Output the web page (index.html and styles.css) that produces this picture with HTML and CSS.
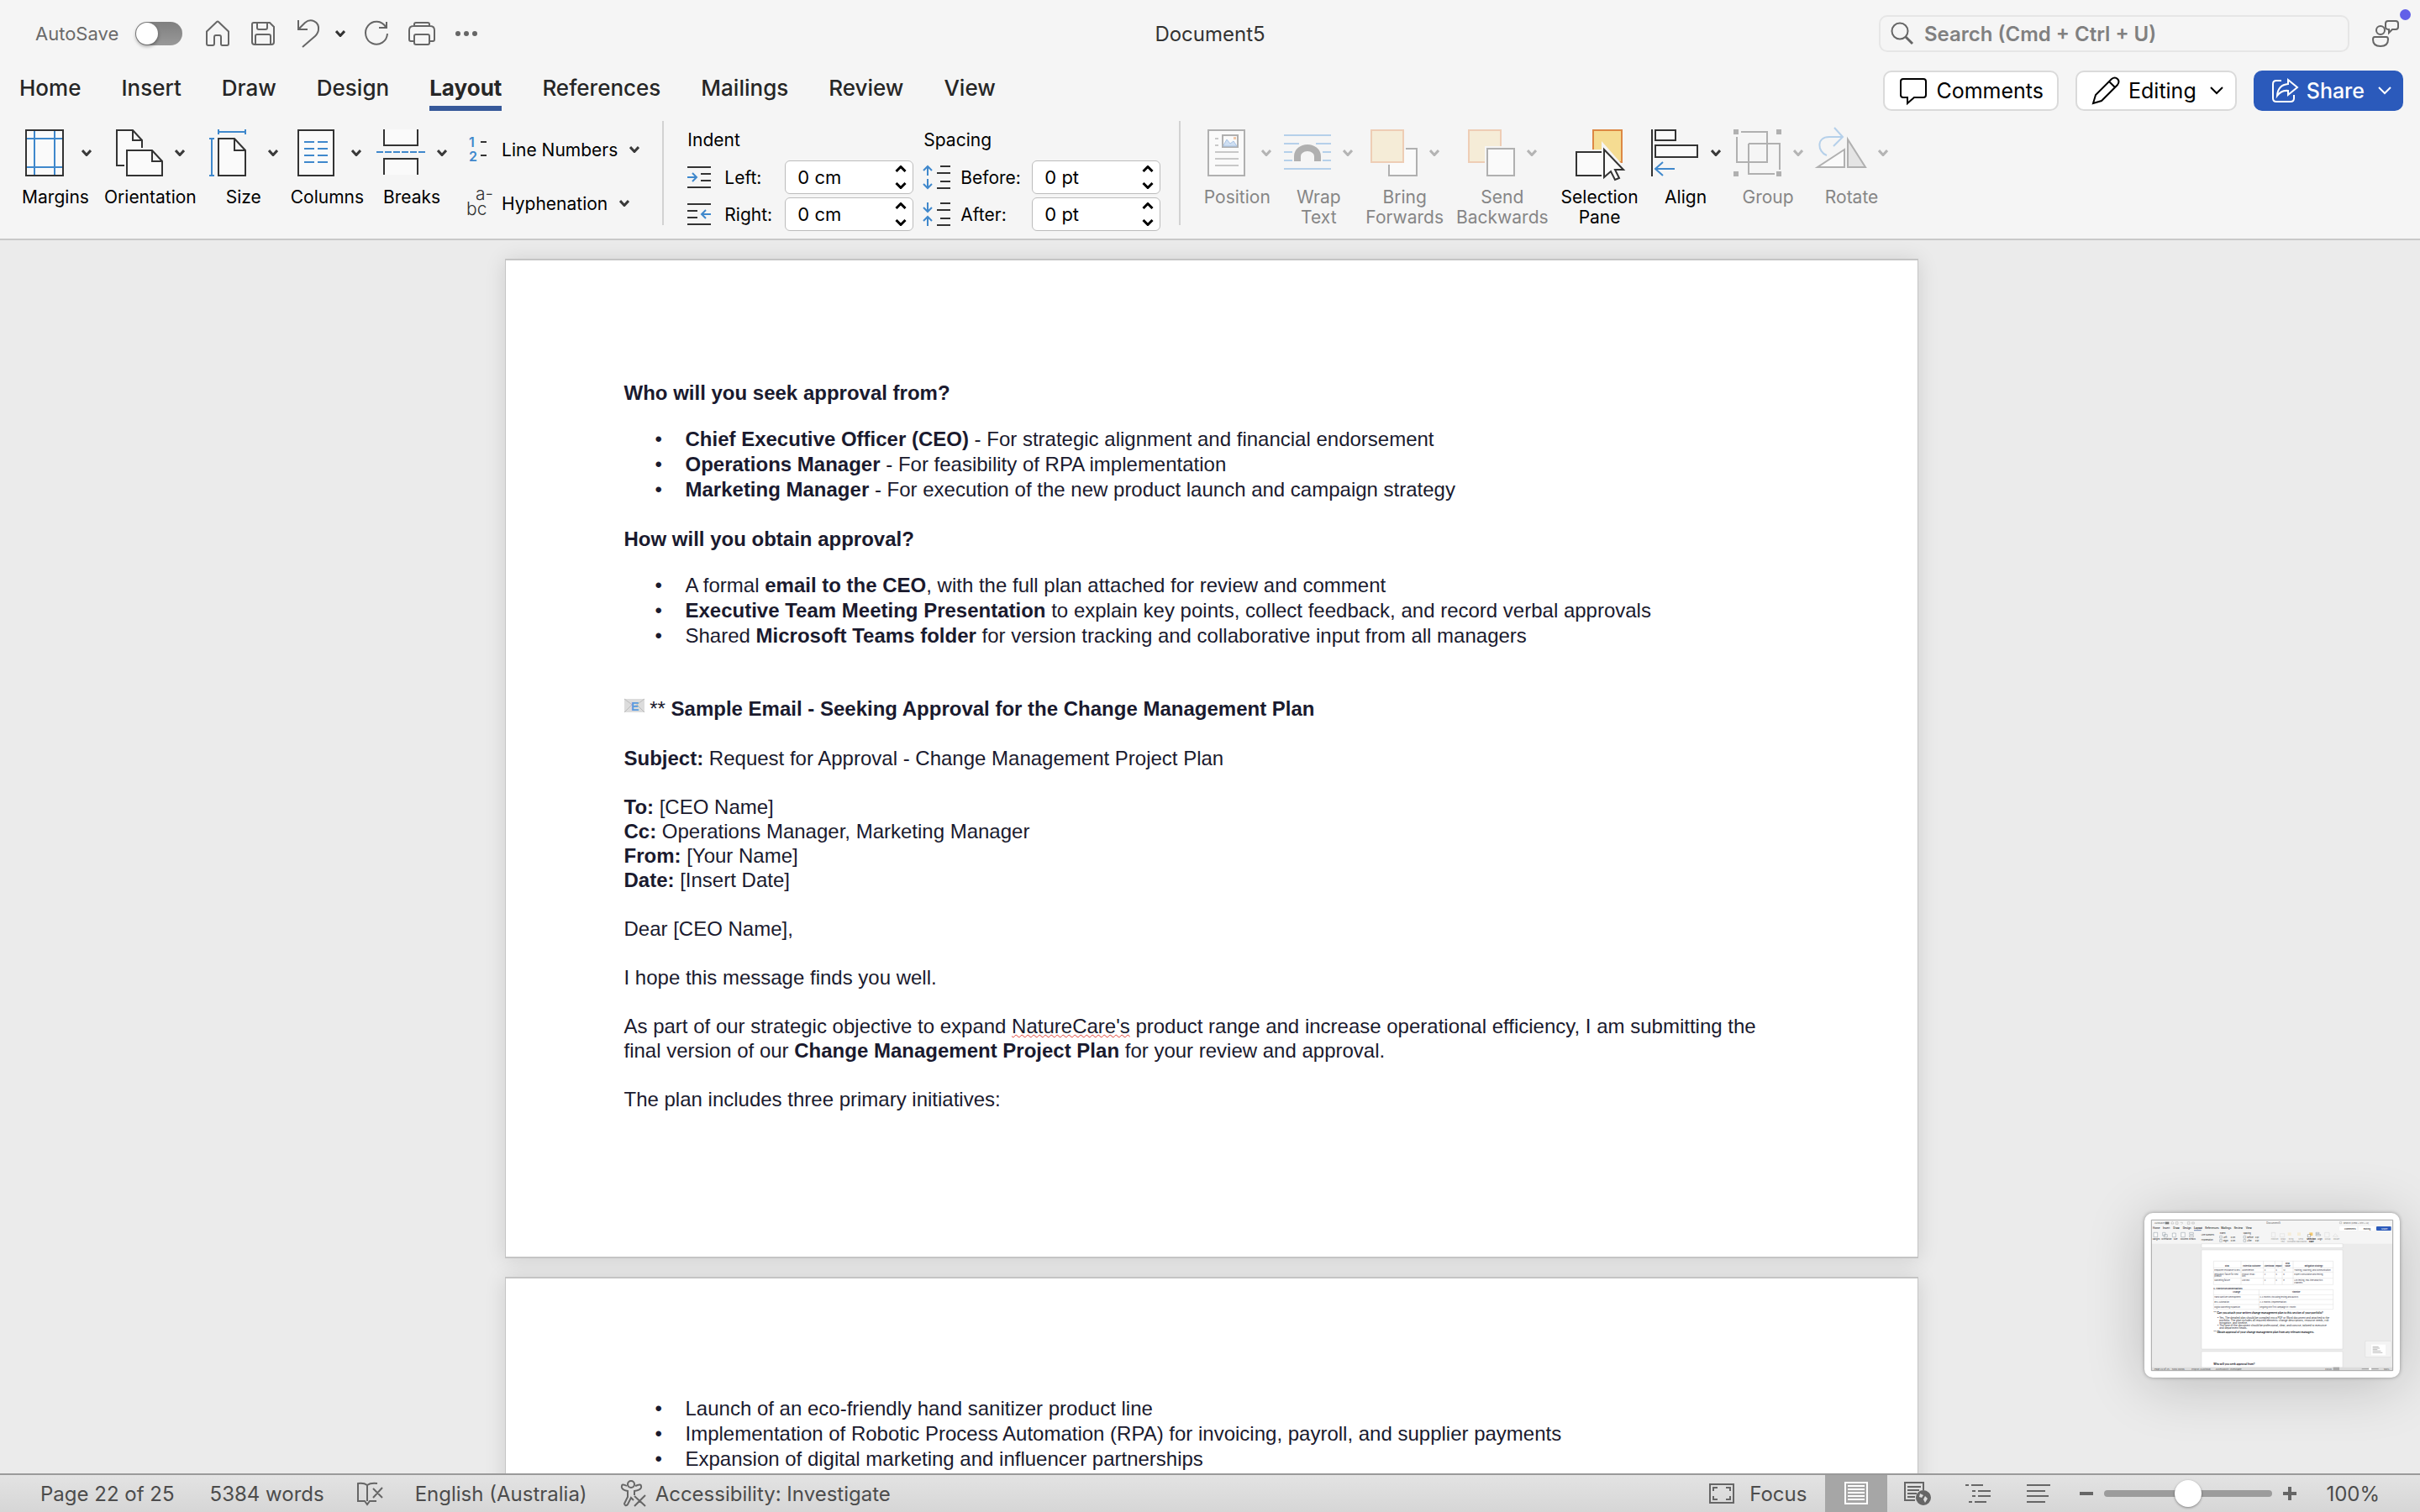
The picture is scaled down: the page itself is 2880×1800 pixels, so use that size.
FILE: index.html
```html
<!DOCTYPE html>
<html lang="en">
<head>
<meta charset="UTF-8">
<title>Document5</title>
<link rel="stylesheet" href="styles.css">
</head>
<body>

<svg class="defs" aria-hidden="true">
  <symbol id="chev" viewBox="0 0 12 8"><path d="M1 1L6 6.500L11 1" fill="none" stroke="currentColor" stroke-width="3"/></symbol>
  <symbol id="thin-chev" viewBox="0 0 16 10"><path d="M1 1L8 8L15 1" fill="none" stroke="currentColor" stroke-width="2"/></symbol>
  <symbol id="up" viewBox="0 0 14 8"><path d="M1.500 7L7 1.500L12.500 7" fill="none" stroke="currentColor" stroke-width="3"/></symbol>
  <symbol id="down" viewBox="0 0 14 8"><path d="M1.500 1L7 6.500L12.500 1" fill="none" stroke="currentColor" stroke-width="3"/></symbol>
</svg>

<header class="top">
  <div class="titlebar">
    <div class="quick">
      <label class="autosave">AutoSave <input type="checkbox" class="toggle"></label>
      <button class="icon" aria-label="Home"><svg width="32" height="32" viewBox="-1 0 32 32"><path d="M2 13.500L14 2Q15 1 16 2L28 13.500V28Q28 30 26 30H20.500Q19 30 19 28V20Q19 18 17 18H13Q11 18 11 20V28Q11 30 9 30H4Q2 30 2 28Z"/></svg></button>
      <button class="icon" aria-label="Save"><svg width="32" height="32" viewBox="-1 0 32 32"><path d="M4 3H23L28 8V26Q28 29 25 29H5Q2 29 2 26V5Q2 3 4 3ZM8 3V9Q8 11 10 11H18Q20 11 20 9V3M6 29V19Q6 17 8 17H22Q24 17 24 19V29"/></svg></button>
      <span class="undo">
        <button class="icon" aria-label="Undo"><svg width="32" height="34" viewBox="-1 0 32 34"><path d="M3 1V12H14M3 12L11 4C18 -2 28 3 27 12C27 16 25 18 23 20L8 33"/></svg></button>
        <button class="icon dark" aria-label="Undo list"><svg width="12" height="8"><use href="#chev"/></svg></button>
      </span>
      <button class="icon" aria-label="Redo"><svg width="30" height="32" viewBox="0 0 30 32"><path d="M27 2V9H18M26 8A13 13.500 0 1 0 28 16"/></svg></button>
      <button class="icon print" aria-label="Print"><svg width="34" height="32" viewBox="0 0 34 32"><path d="M8 7V5Q8 3 10 3H24Q26 3 26 5V7M8 25H4Q2 25 2 23V12Q2 7 7 7H27Q32 7 32 12V23Q32 25 30 25H26M10 17H24Q26 17 26 19V27Q26 29 24 29H10Q8 29 8 27V19Q8 17 10 17Z"/></svg></button>
      <button class="icon" aria-label="More"><svg width="28" height="8" viewBox="0 0 28 8"><g fill="#666" stroke="none"><circle cx="4" cy="4" r="3"/><circle cx="14" cy="4" r="3"/><circle cx="24" cy="4" r="3"/></g></svg></button>
    </div>
    <h1 class="title">Document5</h1>
    <div class="title-right">
      <div class="search">
        <svg width="28" height="28" viewBox="0 0 28 28"><circle cx="11" cy="11" r="9.500"/><path d="M18 18L26 26" stroke-width="3"/></svg>
        <input type="text" aria-label="Search" placeholder="Search (Cmd + Ctrl + U)">
      </div>
      <button class="icon presence" aria-label="Feedback">
        <svg width="34" height="34" viewBox="0 0 34 34"><circle cx="11" cy="13" r="5"/><path d="M4 21H18Q20 21 20 24Q20 32 11 32Q2 32 2 24Q2 21 4 21ZM20 2H29Q32 2 32 5V9Q32 12 29 12H25L21 16V12Q17 12 17 9V5Q17 2 20 2Z"/></svg>
        <span class="dot"></span>
      </button>
    </div>
  </div>

  <div class="tabrow">
    <nav class="tabs">
      <button>Home</button>
      <button>Insert</button>
      <button>Draw</button>
      <button>Design</button>
      <button class="active">Layout</button>
      <button>References</button>
      <button>Mailings</button>
      <button>Review</button>
      <button>View</button>
    </nav>
    <div class="actions">
      <button class="action"><svg width="34" height="34" viewBox="0 0 34 34"><path d="M5 3H29Q32 3 32 6V22Q32 25 29 25H18L10 32V25H5Q2 25 2 22V6Q2 3 5 3Z"/></svg>Comments</button>
      <button class="action"><svg width="34" height="34" viewBox="0 0 34 34"><path d="M2 32L5 22L24 3Q28 0 31 3Q34 6 31 10L12 29ZM21 6L28 13"/></svg>Editing<svg class="arrow" width="16" height="10"><use href="#thin-chev"/></svg></button>
      <button class="action share"><svg width="32" height="32" viewBox="0 0 32 32"><path d="M12 4H6Q2 4 2 8V25Q2 29 6 29H23Q27 29 27 25V21M20 3L31 12L20 21V16Q12 15 7 22Q8 9 20 8Z"/></svg>Share<svg class="arrow" width="16" height="10"><use href="#thin-chev"/></svg></button>
    </div>
  </div>

  <div class="ribbon">
    <div class="group">
      <button class="tool">
        <span class="pic"><svg width="60" height="56" viewBox="-7 0 60 56"><path class="k" d="M1 1H45V55H1Z"/><path class="b" d="M11 2V54M35 2V54M2 11H44M2 45H44"/></svg><svg class="chev" width="12" height="8"><use href="#chev"/></svg></span>
        Margins
      </button>
      <button class="tool">
        <span class="pic"><svg width="56" height="56"><path class="k" d="M10 43H1V1H20L31 13V22M20 1V13H31"/><path class="k" d="M13 25H43L55 38V55H13ZM43 25V38H55"/></svg><svg class="chev" width="12" height="8"><use href="#chev"/></svg></span>
        Orientation
      </button>
      <button class="tool">
        <span class="pic"><svg width="56" height="56"><path class="b" d="M11 3H43M11 0V6M43 0V6M3 11V55M0 11H6M0 55H6"/><path class="k" d="M11 11H30L43 25V55H11ZM30 11V25H43"/></svg><svg class="chev" width="12" height="8"><use href="#chev"/></svg></span>
        Size
      </button>
      <button class="tool">
        <span class="pic"><svg width="56" height="56" viewBox="-6 0 56 56"><path class="k" d="M1 1H43V55H1Z"/><path class="b" d="M8 15H20M24 15H36M8 23H20M24 23H36M8 31H20M24 31H36M8 39H20M24 39H36"/></svg><svg class="chev" width="12" height="8"><use href="#chev"/></svg></span>
        Columns
      </button>
      <button class="tool">
        <span class="pic"><svg width="58" height="56"><path class="k" d="M9 0V19H49V0M9 54V35H49V54"/><path class="b" d="M0 27H58" stroke-dasharray="8 2"/></svg><svg class="chev" width="12" height="8"><use href="#chev"/></svg></span>
        Breaks
      </button>
      <div class="stack">
        <button class="row-tool"><svg width="28" height="32"><text class="num" x="3" y="13">1</text><text class="num" x="3" y="30">2</text><path class="k" d="M17 7H24M17 23H24"/></svg>Line Numbers<svg class="chev" width="12" height="8"><use href="#chev"/></svg></button>
        <button class="row-tool"><svg width="28" height="32"><text class="abc" x="11" y="12">a-</text><text class="abc" x="0" y="30">bc</text></svg>Hyphenation<svg class="chev" width="12" height="8"><use href="#chev"/></svg></button>
      </div>
    </div>

    <div class="group fields">
      <h2>Indent</h2>
      <h2 class="second">Spacing</h2>

      <svg width="28" height="28"><path class="k" d="M0 2H28M16 10H28M16 18H28M0 26H28"/><path class="b" d="M0 14H11M6 9L11 14L6 19"/></svg>
      <label for="left">Left:</label>
      <div class="spin"><input id="left" type="text" value="0 cm"><span class="steps"><button aria-label="More"><svg width="14" height="8"><use href="#up"/></svg></button><button aria-label="Less"><svg width="14" height="8"><use href="#down"/></svg></button></span></div>
      <svg class="second" width="32" height="28"><path class="k" d="M20 1H32M16 9H32M20 19H32M16 27H32"/><path class="b" d="M5 12V1M0 6L5 1L10 6M5 16V27M0 22L5 27L10 22"/></svg>
      <label class="second" for="before">Before:</label>
      <div class="spin"><input id="before" type="text" value="0 pt"><span class="steps"><button aria-label="More"><svg width="14" height="8"><use href="#up"/></svg></button><button aria-label="Less"><svg width="14" height="8"><use href="#down"/></svg></button></span></div>

      <svg width="28" height="28"><path class="k" d="M0 2H28M0 10H12M0 18H12M0 26H28"/><path class="b" d="M28 14H17M22 9L17 14L22 19"/></svg>
      <label for="right">Right:</label>
      <div class="spin"><input id="right" type="text" value="0 cm"><span class="steps"><button aria-label="More"><svg width="14" height="8"><use href="#up"/></svg></button><button aria-label="Less"><svg width="14" height="8"><use href="#down"/></svg></button></span></div>
      <svg class="second" width="32" height="28"><path class="k" d="M20 1H32M16 9H32M20 19H32M16 27H32"/><path class="b" d="M5 0V11M0 6L5 11L10 6M5 28V17M0 22L5 17L10 22"/></svg>
      <label class="second" for="after">After:</label>
      <div class="spin"><input id="after" type="text" value="0 pt"><span class="steps"><button aria-label="More"><svg width="14" height="8"><use href="#up"/></svg></button><button aria-label="Less"><svg width="14" height="8"><use href="#down"/></svg></button></span></div>
    </div>

    <div class="group arrange">
      <button class="tool" disabled>
        <span class="pic"><svg width="56" height="56" viewBox="-6 0 56 56"><path class="k" d="M1 1H44V55H1Z"/><path class="g" d="M9 11H13M9 19H13M9 27H37M9 35H37M9 43H37"/><path class="k" d="M18 7H36V21H18Z"/><path d="M19 19L23 12L27 17L31 14L35 20H19Z" fill="#cfdff2" stroke="#a9c3e4"/><path d="M31 9H34V12H31Z" fill="#f1c7a7"/></svg><svg class="chev" width="12" height="8"><use href="#chev"/></svg></span>
        Position
      </button>
      <button class="tool" disabled>
        <span class="pic"><svg width="56" height="56"><path class="b" d="M0 7H56M0 17H18M38 17H56M0 27H10M46 27H56M0 37H10M46 37H56M0 47H56"/><path d="M16 38V32A12 10 0 0 1 40 32V38" fill="none" stroke="#b0b0b0" stroke-width="8"/></svg><svg class="chev" width="12" height="8"><use href="#chev"/></svg></span>
        Wrap<br>Text
      </button>
      <button class="tool" disabled>
        <span class="pic"><svg width="56" height="56"><path class="k" d="M42 23H55V55H22V42"/><path class="o" d="M1 1H39V39H1Z"/></svg><svg class="chev" width="12" height="8"><use href="#chev"/></svg></span>
        Bring<br>Forwards
      </button>
      <button class="tool" disabled>
        <span class="pic"><svg width="56" height="56"><path class="o" d="M1 1H39V39H1Z"/><path d="M20 20H56V56H20Z" fill="#f5f5f5"/><path class="k" d="M23 23H55V55H23Z"/></svg><svg class="chev" width="12" height="8"><use href="#chev"/></svg></span>
        Send<br>Backwards
      </button>
      <button class="tool">
        <span class="pic"><svg width="60" height="56"><path class="o" d="M22 1H56V39H22Z"/><path d="M19 24H38V56H19Z" fill="#f5f5f5"/><path class="k" d="M2 27H37V55H2Z"/><path d="M35 22V57L43 50L48 60L53 58L48 48H58Z" fill="#fff" stroke="#f5f5f5" stroke-width="6"/><path class="k" d="M35 24V57L43 50L48 60L53 58L48 48H58Z"/></svg></span>
        Selection<br>Pane
      </button>
      <button class="tool">
        <span class="pic"><svg width="57" height="56"><path class="k" d="M1 0V56M5 1H29V13H5ZM5 19H55V33H5Z"/><path class="b" d="M28 47H5M14 39L5 47L14 55"/></svg><svg class="chev" width="12" height="8"><use href="#chev"/></svg></span>
        Align
      </button>
      <button class="tool" disabled>
        <span class="pic"><svg width="57" height="56"><path class="k hollow" d="M9 3H40V39H4V9M18 17H55V48M49 53H18V17"/><path d="M0 0H6V6H0ZM51 0H57V6H51ZM0 50H6V56H0ZM51 50H57V56H51Z" fill="#b0b0b0"/></svg><svg class="chev" width="12" height="8"><use href="#chev"/></svg></span>
        Group
      </button>
      <button class="tool" disabled>
        <span class="pic"><svg width="60" height="56"><path class="b" d="M13 31C2 27 0 9 16 9H31M22 -2L32 9L21 20"/><path class="k" d="M34 24V45H2Z"/><path class="k filled" d="M38 12V45H59Z"/></svg><svg class="chev" width="12" height="8"><use href="#chev"/></svg></span>
        Rotate
      </button>
    </div>
  </div>
</header>

<main class="workspace">
  <div class="page-above"></div>
  <article class="page">
    <p><b>Who will you seek approval from?</b></p>
    <ul>
      <li><b>Chief Executive Officer (CEO)</b> - For strategic alignment and financial endorsement</li>
      <li><b>Operations Manager</b> - For feasibility of RPA implementation</li>
      <li><b>Marketing Manager</b> - For execution of the new product launch and campaign strategy</li>
    </ul>
    <p><b>How will you obtain approval?</b></p>
    <ul>
      <li>A formal <b>email to the CEO</b>, with the full plan attached for review and comment</li>
      <li><b>Executive Team Meeting Presentation</b> to explain key points, collect feedback, and record verbal approvals</li>
      <li>Shared <b>Microsoft Teams folder</b> for version tracking and collaborative input from all managers</li>
    </ul>
    <p class="sample"><svg class="mail" width="24" height="16" viewBox="0 0 24 16"><path d="M0 0H24V16H0Z" fill="#dcdcdc"/><path d="M0 0L12 9L24 0M0 16L9 7M24 16L15 7" fill="none" stroke="#bbb"/><text x="8" y="14">E</text></svg> <span class="stars">**</span> <b>Sample Email - Seeking Approval for the Change Management Plan</b></p>
    <p><b>Subject:</b> Request for Approval - Change Management Project Plan</p>
    <p><b>To:</b> [CEO Name]<br><b>Cc:</b> Operations Manager, Marketing Manager<br><b>From:</b> [Your Name]<br><b>Date:</b> [Insert Date]</p>
    <p>Dear [CEO Name],</p>
    <p>I hope this message finds you well.</p>
    <p>As part of our strategic objective to expand <span class="spell">NatureCare's</span> product range and increase operational efficiency, I am submitting the<br>final version of our <b>Change Management Project Plan</b> for your review and approval.</p>
    <p>The plan includes three primary initiatives:</p>
  </article>
  <article class="page">
    <ul>
      <li>Launch of an eco-friendly hand sanitizer product line</li>
      <li>Implementation of Robotic Process Automation (RPA) for invoicing, payroll, and supplier payments</li>
      <li>Expansion of digital marketing and influencer partnerships</li>
    </ul>
  </article>
</main>

<footer class="status">
  <span>Page 22 of 25</span>
  <span class="words">5384 words</span>
  <button class="icon proof" aria-label="Proofing"><svg width="32" height="28" viewBox="0 0 32 28"><path d="M12 4Q8 1 1 2V23H9L12 27L15 23H23M12 4Q16 1 24 2M12 4V23M19 8L30 19M30 7L19 19"/></svg></button>
  <span>English (Australia)</span>
  <button class="access"><svg width="32" height="32" viewBox="0 0 32 32"><circle cx="13" cy="5" r="4"/><path d="M8 7Q1 3 2 9Q3 12 9 13V20L5 28Q6 32 9 29L13 21L16 24M18 7Q26 3 25 9Q24 12 17 13V18M17 19L30 31M30 18L17 31"/></svg>Accessibility: Investigate</button>

  <button class="focus"><svg width="30" height="24" viewBox="0 0 30 24"><path d="M1 1H29V23H1ZM5 9V5H10M20 5H25V9M25 15V19H20M10 19H5V15"/></svg>Focus</button>
  <button class="view on" aria-label="Print layout"><svg width="28" height="28" viewBox="0 0 28 28"><path d="M1 1H27V26H1Z" fill="#a6a6a6" stroke="#fff"/><path d="M4 5H24M4 9H24M4 13H24M4 17H24M4 21H24" stroke="#fff"/></svg></button>
  <button class="view" aria-label="Web layout"><svg width="32" height="28" viewBox="0 0 32 28"><path d="M13 22H1V1H23V10M4 6H20M4 10H18M4 14H15M4 18H13"/><circle cx="23" cy="19" r="8" fill="#666"/><path d="M19 14L23 16L21 19L18 18ZM25 17L28 20L25 25L23 21Z" fill="#ddd" stroke="none"/></svg></button>
  <button class="view" aria-label="Outline"><svg width="32" height="24" viewBox="0 0 32 24"><path d="M1 2H5M8 2H22M9 9H13M16 9H31M9 15H13M16 15H31M5 22H9M12 22H26"/></svg></button>
  <button class="view" aria-label="Draft"><svg width="30" height="24" viewBox="0 0 30 24"><path d="M1 2H29M1 9H23M1 15H27M1 22H23"/></svg></button>
  <button class="step" aria-label="Zoom out"><svg width="18" height="18"><path d="M1 9H17" stroke-width="4"/></svg></button>
  <input class="zoom" type="range" min="0" max="200" value="100" aria-label="Zoom">
  <button class="step" aria-label="Zoom in"><svg width="18" height="18"><path d="M1 9H17M9 1V17" stroke-width="4"/></svg></button>
  <span class="percent">100%</span>
</footer>

<!-- floating preview of the last capture -->
<aside class="preview">
  <svg width="288" height="180" viewBox="0 0 864 540">
    <path d="M0 0H864V540H0Z" fill="#ebebeb"/>
    <path d="M0 0H864V86H0Z" fill="#f5f5f5"/>
    <path d="M180 86H684V100H180ZM180 108H684V462H180ZM180 471H684V528H180Z" fill="#fff" stroke="#ccc"/>
    <g font-size="8" fill="#555">
      <text x="12" y="15">AutoSave</text><text x="412" y="15" font-size="9">Document5</text><text x="686" y="15">Search (Cmd + Ctrl + U)</text>
    </g>
    <path d="M50 8H64V16H50Z" fill="#777"/>
    <path d="M72 15V10L76 7L80 10V15ZM88 8H96V16H88ZM104 10H112V13L108 17M130 8H138V16H130ZM146 9H154V15H146ZM673 8H680V14H673Z" fill="none" stroke="#888"/>
    <g font-size="9" fill="#222" font-weight="500">
      <text x="6" y="34">Home</text><text x="42" y="34">Insert</text><text x="79" y="34">Draw</text><text x="113" y="34">Design</text><text x="153" y="34" font-weight="700">Layout</text><text x="193" y="34">References</text><text x="250" y="34">Mailings</text><text x="296" y="34">Review</text><text x="338" y="34">View</text>
    </g>
    <path d="M153 38H179" stroke="#2f5597" stroke-width="2"/>
    <rect x="672" y="24" width="63" height="15" rx="3" fill="#fff"/><rect x="741" y="24" width="57" height="15" rx="3" fill="#fff"/><rect x="804" y="24" width="53" height="15" rx="3" fill="#2b5abb"/>
    <text x="690" y="35" font-size="8">Comments</text><text x="758" y="35" font-size="8">Editing</text><text x="822" y="35" font-size="8" fill="#fff">Share</text>
    <path d="M9 46H23V62H9ZM41 46H51V57H41ZM46 53H58V62H46ZM76 48H88V62H76ZM107 46H121V62H107ZM137 46H151V52H137ZM137 56H151V62H137ZM245 58H253V66H245ZM245 71H253V79H245ZM330 58H338V66H330ZM330 71H338V79H330ZM588 46H600V50H588ZM588 53H605V57H588Z" fill="#fafafa" stroke="#567"/>
    <path d="M430 46H443V62H430ZM460 50H476V62H460ZM620 46H636V62H620ZM649 60L658 50L667 60Z" fill="none" stroke="#ccc"/>
    <path d="M488 46H500V57H488ZM522 46H534V57H522Z" fill="#f5ecd7"/><path d="M565 46H577V57H565Z" fill="#f4ca70"/><path d="M559 53H569V62H559Z" fill="#fff" stroke="#333"/>
    <g font-size="7" fill="#222">
      <text x="5" y="72">Margins</text><text x="37" y="72">Orientation</text><text x="80" y="72">Size</text><text x="104" y="72">Columns</text><text x="136" y="72">Breaks</text><text x="179" y="56">Line Numbers</text><text x="179" y="75">Hyphenation</text>
      <text x="245" y="52">Indent</text><text x="329" y="52">Spacing</text><text x="258" y="65">Left:</text><text x="258" y="78">Right:</text><text x="343" y="65">Before:</text><text x="343" y="78">After:</text>
      <text x="284" y="65">0 cm</text><text x="284" y="78">0 cm</text><text x="372" y="65">0 pt</text><text x="372" y="78">0 pt</text>
      <text x="556" y="72" font-weight="700">Selection</text><text x="564" y="80" font-weight="700">Pane</text><text x="594" y="72">Align</text>
      <g fill="#999"><text x="428" y="72">Position</text><text x="462" y="72">Wrap</text><text x="463" y="80">Text</text><text x="491" y="72">Bring</text><text x="486" y="80">Forwards</text><text x="526" y="72">Send</text><text x="519" y="80">Backwards</text><text x="620" y="72">Group</text><text x="651" y="72">Rotate</text></g>
    </g>
    <path d="M223 148H650V232H223ZM223 172H650M223 187H650M223 209H650M321 148V232M401 148V232M442 148V232M468 148V232M507 148V232M223 250H650V320H223ZM223 268H650M223 285H650M223 303H650M385 250V320" fill="none" stroke="#ccc"/>
    <g font-size="7" fill="#3a3a4a">
      <g font-weight="700"><text x="264" y="168">Risk</text><text x="328" y="168">Potential Outcome</text><text x="404" y="168">Likelihood</text><text x="444" y="168">Impact</text><text x="480" y="160">Risk</text><text x="478" y="168">Value</text><text x="548" y="168">Mitigation Strategy</text><text x="223" y="248">6. Timeline Recommendations</text><text x="292" y="262">Change</text><text x="503" y="262">Timeline</text></g>
      <text x="226" y="182">Employee resistance to RPA</text><text x="324" y="182">Absenteeism</text><text x="404" y="182">3</text><text x="445" y="182">4</text><text x="472" y="182">12</text><text x="511" y="182">Training, coaching, and communication</text>
      <text x="226" y="197">Regulatory failure for new</text><text x="226" y="205">product</text><text x="324" y="197">Product recall</text><text x="324" y="205">loss</text><text x="404" y="197">2</text><text x="445" y="197">4</text><text x="472" y="197">8</text><text x="511" y="197">Expert consultation and testing</text>
      <text x="226" y="220">Marketing failure</text><text x="324" y="220">Low ROI</text><text x="404" y="220">3</text><text x="445" y="220">3</text><text x="472" y="220">9</text><text x="511" y="220">A/B testing, real-time analytics</text><text x="511" y="228">channels</text>
      <text x="226" y="278">Hand Sanitizer Development</text><text x="388" y="278">3-4 months (including testing and launch)</text><text x="226" y="296">RPA Automation</text><text x="388" y="296">2-3 months (implementation)</text><text x="226" y="314">Digital Marketing Expansion</text><text x="388" y="314">Ongoing with first campaign in 1 month</text>
    </g>
    <g class="mini-body">
      <text x="223" y="337" font-weight="700">** Can you attach your written change management plan to this section of your portfolio?</text>
      <text x="236" y="354">• Yes. The detailed plan should be compiled into a PDF or Word document and attached to the</text><text x="244" y="363">portfolio. The plan includes all required elements: change descriptions, resource needs, risk</text><text x="244" y="372">mitigation, and timeline.</text>
      <text x="236" y="381">• The tone of the document should be professional, clear, and concise, tailored to executive</text><text x="244" y="390">and department heads.</text>
      <text x="223" y="406" font-weight="700">** Obtain approval of your change management plan from any relevant managers.</text>
      <text x="223" y="520" font-weight="700">Who will you seek approval from?</text>
    </g>
    <path d="M0 527H864V540H0Z" fill="#dcdcdc"/><path d="M650 527H672V540H650Z" fill="#aaa"/>
    <g font-size="8" fill="#555"><text x="12" y="536">Page 22 of 25</text><text x="74" y="536">5384 words</text><text x="145" y="536">English (Australia)</text><text x="230" y="536">Accessibility: Investigate</text><text x="622" y="536">Focus</text><text x="830" y="536">100%</text></g>
    <path d="M752 533H812" stroke="#999" stroke-width="3"/><circle cx="782" cy="533" r="5" fill="#fff"/>
    <rect x="764" y="433" width="94" height="58" rx="4" fill="#f3f3f3" stroke="#ccc"/><path d="M786 446H837V484H786Z" fill="#fff"/><path d="M791 454H812M791 459H816M791 464H808M791 469H820M791 475H826" stroke="#999" stroke-width="2"/>
    <path d="M1 1H863V539H1Z" fill="none" stroke="#a5a5a5" stroke-width="3"/>
  </svg>
</aside>

</body>
</html>
```
FILE: styles.css
```css
* {
  box-sizing: border-box;
}

body {
  margin: 0;
  height: 100vh;
  display: flex;
  flex-direction: column;
  overflow: hidden;
  background: #ebebeb;
  color: #000;
  font-family: Inter, "Liberation Sans", sans-serif;
  font-size: 21px;
}

button, input {
  font: inherit;
  color: inherit;
  background: none;
  border: 0;
  padding: 0;
  margin: 0;
}

svg {
  display: block;
  flex: none;
  overflow: visible;
}

.defs {
  position: absolute;
  width: 0;
  height: 0;
}

/* title bar */
.top {
  flex: none;
  background: #f5f5f5;
  border-bottom: 2px solid #c8c8c8;
  position: relative;
  z-index: 1;
}

.titlebar {
  display: grid;
  grid-template-columns: 1fr auto 1fr;
  align-items: center;
  height: 80px;
  padding: 0 24px;
}

.quick {
  display: flex;
  align-items: center;
  gap: 22px;
  margin-left: 18px;
}

.autosave {
  display: flex;
  align-items: center;
  gap: 20px;
  margin-right: 4px;
  color: #6a6a6a;
  font-size: 22px;
}

.toggle {
  appearance: none;
  width: 56px;
  height: 28px;
  border-radius: 14px;
  background: linear-gradient(#7f7f7f, #999);
  display: flex;
}

.toggle::before {
  content: "";
  width: 26px;
  height: 26px;
  margin: 1px;
  border-radius: 50%;
  background: #fff;
  box-shadow: 0 2px 4px rgba(0, 0, 0, .4);
}

.icon svg,
.search svg,
.action svg,
.status svg {
  fill: none;
  stroke: #666;
  stroke-width: 2;
}

.undo {
  display: flex;
  align-items: center;
  gap: 16px;
}

.dark {
  color: #333;
}

.title {
  margin: 0;
  font-size: 24px;
  font-weight: 400;
  color: #333;
}

.title-right {
  display: flex;
  justify-content: flex-end;
  align-items: center;
  gap: 26px;
}

.search {
  display: flex;
  align-items: center;
  gap: 12px;
  width: 560px;
  height: 44px;
  padding: 0 12px;
  border: 2px solid #e6e6e6;
  border-radius: 10px;
}

.search input {
  flex: 1;
  font-size: 24px;
  font-weight: 600;
  outline: 0;
}

.search input::placeholder {
  color: #808080;
  opacity: 1;
}

.presence {
  position: relative;
}

.dot {
  position: absolute;
  top: -12px;
  right: -13px;
  width: 13px;
  height: 17px;
  border-radius: 50%;
  height: 13px;
  background: #6260e8;
}

/* tabs */
.tabrow {
  display: flex;
  justify-content: space-between;
  align-items: center;
  height: 56px;
  padding: 0 20px 0 23px;
}

.tabs {
  display: flex;
  align-self: flex-start;
  gap: 48px;
}

.tabs button {
  font-size: 26px;
  font-weight: 500;
  line-height: 38px;
  padding: 6px 0 2px;
  border-bottom: 6px solid transparent;
  color: #262626;
}

.tabs .active {
  font-weight: 700;
  border-image: linear-gradient(#365899, #365899) 1;
}

.actions {
  display: flex;
  gap: 20px;
}

.action {
  display: flex;
  align-items: center;
  gap: 10px;
  height: 48px;
  padding: 0 16px 0 17px;
  border: 2px solid #dadada;
  border-radius: 10px;
  background: #fff;
  font-size: 25px;
}

.action + .action {
  padding-right: 14px;
}

.action svg {
  stroke: #000;
}

.action .arrow {
  margin-left: 6px;
}

.actions .share {
  color: #fff;
  background: #2b5abb;
  border-color: #2b5abb;
  font-weight: 500;
  padding: 0 12px 0 19px;
}

.share svg {
  stroke: #fff;
}

/* ribbon */
.ribbon {
  display: flex;
  height: 148px;
  padding: 8px 0 16px 23px;
}

.group {
  display: flex;
  align-items: flex-start;
  gap: 15px;
  padding-top: 10px;
}

.group + .group {
  border-left: 2px solid #d2d2d2;
}

.tool {
  line-height: 24px;
  text-align: center;
}

.pic {
  display: flex;
  justify-content: center;
  align-items: center;
  gap: 14px;
  margin-bottom: 13px;
}

.chev {
  color: #3a3a3a;
}

.k {
  fill: #fafafa;
  stroke: #333;
  stroke-width: 2;
}

.b {
  fill: none;
  stroke: #3f88cc;
  stroke-width: 2;
}

.o {
  fill: #f5dc92;
  stroke: #dd8844;
  stroke-width: 2;
}

.g {
  stroke: #c8c8c8;
  stroke-width: 2;
}

.tool:disabled {
  color: #868686;
}

.tool:disabled .chev {
  color: #b4b4b4;
}

.tool:disabled .k {
  stroke: #b0b0b0;
}

.tool:disabled .b {
  stroke: #b5d0ea;
}

.tool:disabled .o {
  fill: #f5ecd7;
  stroke: #eecdb5;
}

.tool .hollow {
  fill: none;
}

.tool .filled {
  fill: #e4e4e4;
}

.stack {
  display: flex;
  flex-direction: column;
  gap: 32px;
  margin: 8px 27px 0 8px;
}

.row-tool {
  display: flex;
  align-items: center;
  gap: 14px;
  height: 32px;
}

.num {
  font-size: 16px;
  font-weight: 600;
  fill: #3f88cc;
}

.abc {
  font-size: 21px;
  font-weight: 300;
  fill: #333;
}

.fields {
  display: grid;
  grid-template-columns: 44px 72px 153px 44px 97px 153px;
  grid-template-rows: 33px 40px 40px;
  row-gap: 4px;
  column-gap: 0;
  align-items: center;
  padding: 10px 22px 0 28px;
  align-content: start;
}

.fields h2 {
  grid-column: 1 / 4;
  align-self: start;
  margin: 0;
  font-size: 21px;
  font-weight: 400;
  line-height: 26px;
}

.fields h2.second {
  grid-column: 4 / 7;
}

.fields .second {
  margin-left: 12px;
}

.spin {
  display: flex;
  justify-content: space-between;
  align-items: center;
  height: 40px;
  padding: 0 7px 0 14px;
  background: #fff;
  border: 1px solid #bcbcbc;
  border-radius: 6px;
}

.spin input {
  width: 100px;
  font-size: 22px;
  outline: 0;
}

.steps {
  display: flex;
  flex-direction: column;
  gap: 12px;
}

.arrange {
  padding-left: 26px;
}

/* document */
.workspace {
  flex: 1;
  min-height: 0;
  overflow: hidden;
  display: flex;
  flex-direction: column;
  align-items: center;
  gap: 22px;
  padding-left: 3px;
  font-family: "Liberation Sans", Arial, sans-serif;
  font-size: 24px;
  line-height: 29px;
  color: #1a1a2e;
}

.page-above,
.page {
  width: 1682px;
  flex: none;
  box-shadow: 0 2px 24px rgba(0, 0, 0, .12);
}

.page {
  height: 1190px;
  padding: 143px 141px;
  background: #fff;
  border: 2px solid #c4c4c4;
  border-left-width: 1px;
  border-right-width: 1px;
}

.page p {
  margin: 0 0 29px;
}

.page ul {
  margin: -3px 0 29px;
  padding-left: 73px;
  line-height: 30px;
  list-style: none;
}

.page li::before {
  content: "•";
  display: inline-block;
  width: 36px;
  margin-left: -36px;
}

.page .sample {
  margin-top: 57px;
  margin-bottom: 30px;
}

.mail {
  display: inline-block;
  vertical-align: 4px;
}

.mail text {
  font-size: 14px;
  font-weight: 700;
  fill: #5b9be0;
}

.spell {
  text-decoration: underline wavy #e03c31 1px;
  text-decoration-skip-ink: none;
  text-underline-offset: 1px;
}

/* status bar */
.status {
  flex: none;
  display: flex;
  align-items: center;
  height: 46px;
  padding: 0 48px;
  border-top: 2px solid #9a9a9a;
  background: linear-gradient(#e3e3e3, #d6d6d6);
  color: #4c4c4c;
  font-size: 24px;
  position: relative;
}

.words {
  margin: 0 39px 0 42px;
}

.proof {
  margin-right: 37px;
}

.access,
.focus {
  display: flex;
  align-items: center;
  gap: 10px;
  margin-left: 39px;
}

.focus {
  gap: 18px;
  margin-left: auto;
  margin-right: 22px;
}

.view {
  display: flex;
  align-items: center;
  justify-content: center;
  width: 72px;
  height: 44px;
}

.view.on {
  width: 74px;
  background: #a6a6a6;
}

.step {
  margin: 0 12px;
}

.zoom {
  appearance: none;
  width: 200px;
  height: 8px;
  border-radius: 4px;
  background: #9c9c9c;
}

.zoom::-webkit-slider-thumb {
  appearance: none;
  width: 32px;
  height: 32px;
  border-radius: 50%;
  background: #fff;
  box-shadow: 0 1px 3px rgba(0, 0, 0, .4);
}

.percent {
  margin-left: 22px;
}

.preview {
  position: absolute;
  right: 24px;
  bottom: 160px;
  z-index: 2;
  padding: 8px;
  background: #fff;
  border-radius: 10px;
  box-shadow: 0 0 4px rgba(0, 0, 0, .35), 0 8px 70px rgba(0, 0, 0, .2);
}

.mini-body {
  font-size: 9px;
  fill: #1b1b2b;
}
```
